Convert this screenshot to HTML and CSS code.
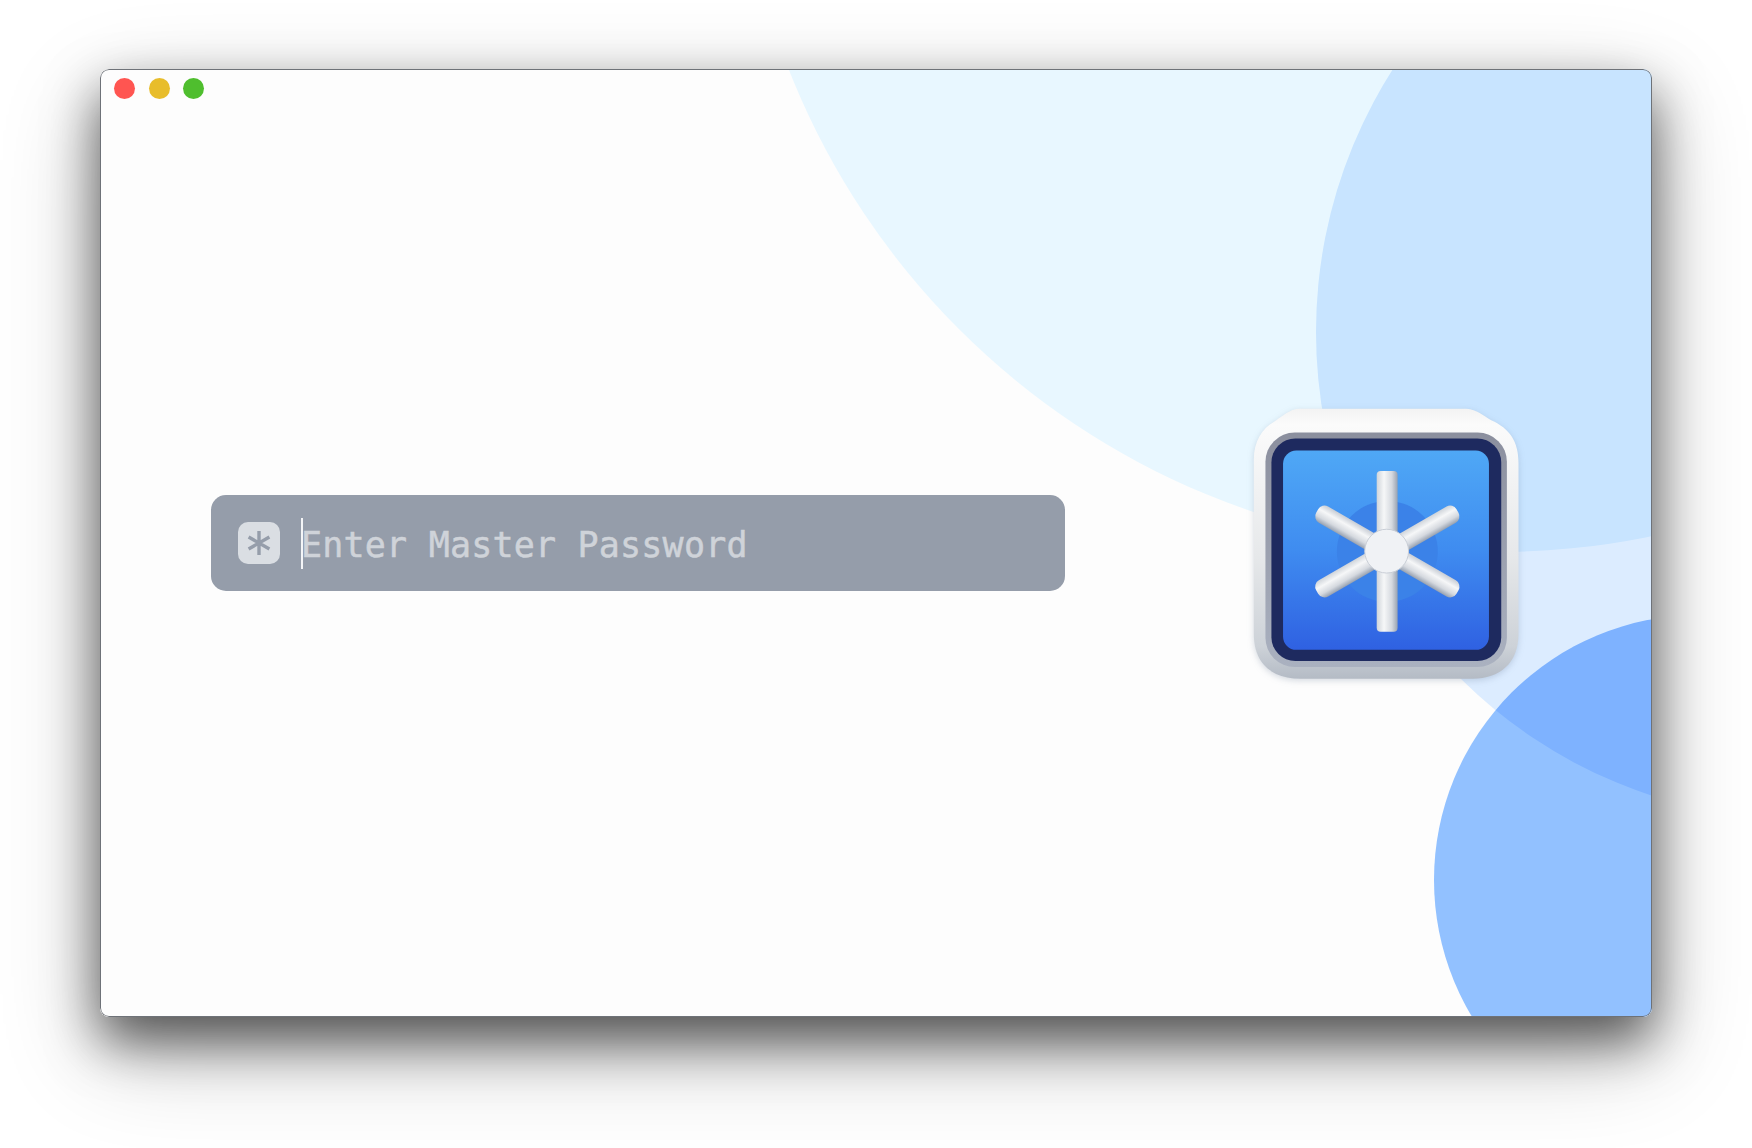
FILE: index.html
```html
<!DOCTYPE html>
<html lang="en">
<head>
<meta charset="utf-8">
<title>Enter Master Password</title>
<link rel="stylesheet" href="styles.css">
</head>
<body>
<main class="window">
  <div class="backdrop">
    <div class="circle circle-top"></div>
    <div class="circle circle-right"></div>
    <div class="circle circle-bottom"></div>
  </div>
  <div class="traffic">
    <span class="light light-red"></span>
    <span class="light light-yellow"></span>
    <span class="light light-green"></span>
  </div>
  <div class="content">
    <div class="password">
      <span class="key">
        <svg class="key-glyph" viewBox="0 0 30 30" aria-hidden="true">
          <path d="M15 3V27M4.6 9 25.4 21M25.4 9 4.6 21"/>
        </svg>
      </span>
      <span class="caret"></span>
      <span class="placeholder">Enter Master Password</span>
    </div>
    <svg class="app-icon" viewBox="98 50 800 816" aria-hidden="true">
      <defs>
        <linearGradient id="shell" x1="0" y1="0" x2="0" y2="1">
          <stop offset="0" stop-color="#f3f3f3"/>
          <stop offset=".06" stop-color="#fbfbfb"/>
          <stop offset=".55" stop-color="#e6e8ea"/>
          <stop offset=".88" stop-color="#cdd2d8"/>
          <stop offset="1" stop-color="#b4bbc5"/>
        </linearGradient>
        <linearGradient id="ring" x1="0" y1="0" x2="0" y2="1">
          <stop offset="0" stop-color="#8b8f9e"/>
          <stop offset="1" stop-color="#aab1c0"/>
        </linearGradient>
        <linearGradient id="face" x1="0" y1="0" x2="0" y2="1">
          <stop offset="0" stop-color="#4fa8f6"/>
          <stop offset=".5" stop-color="#3f8cf0"/>
          <stop offset="1" stop-color="#2f61e2"/>
        </linearGradient>
        <linearGradient id="spoke" x1="0" y1="0" x2="1" y2="0">
          <stop offset="0" stop-color="#cfd4da"/>
          <stop offset=".35" stop-color="#f6f7f8"/>
          <stop offset=".72" stop-color="#d5d9df"/>
          <stop offset="1" stop-color="#98a2b1"/>
        </linearGradient>
        <linearGradient id="spoke-down" x1="0" y1="0" x2="1" y2="0">
          <stop offset="0" stop-color="#98a2b1"/>
          <stop offset=".28" stop-color="#d5d9df"/>
          <stop offset=".65" stop-color="#f6f7f8"/>
          <stop offset="1" stop-color="#c8cdd5"/>
        </linearGradient>
      </defs>
      <path fill="url(#shell)" d="M235 52H740C772 54 790 72 815 87C870 112 897 150 897 215V730C897 820 840 865 760 865H240C155 865 100 820 100 730V205C100 150 125 112 160 92C190 72 205 55 235 52Z"/>
      <rect x="135" y="124" width="727" height="706" rx="88" fill="url(#ring)"/>
      <rect x="153" y="142" width="692" height="670" rx="72" fill="#1e2a5f"/>
      <rect x="188" y="178" width="620" height="600" rx="40" fill="url(#face)"/>
      <circle cx="502" cy="482" r="152" fill="#3b82e8"/>
      <rect x="474" y="238" width="56" height="488" rx="22" fill="url(#spoke)" transform="rotate(60 502 482)"/>
      <rect x="474" y="238" width="56" height="488" rx="22" fill="url(#spoke-down)" transform="rotate(-60 502 482)"/>
      <rect x="470" y="240" width="63" height="484" rx="12" fill="url(#spoke)"/>
      <circle cx="500" cy="481" r="66" fill="#f0f2f5" stroke="#c9ced6" stroke-width="3"/>
    </svg>
  </div>
</main>
</body>
</html>
```

FILE: styles.css
```css
html, body {
  margin: 0;
  height: 100%;
  background: #fff;
  overflow: hidden;
}

body {
  padding: 69px 100px 131px;
  box-sizing: border-box;
}

.window {
  position: relative;
  box-sizing: border-box;
  width: 1552px;
  height: 948px;
  overflow: hidden;
  background: #fdfdfd;
  border-radius: 9px;
}

.window::after {
  content: "";
  position: absolute;
  inset: 0;
  z-index: 5;
  border: 1px solid #6e7278;
  border-radius: 9px;
  pointer-events: none;
}

body::before {
  content: "";
  position: absolute;
  left: 100px;
  top: 69px;
  width: 1552px;
  height: 948px;
  border-radius: 9px;
  box-shadow:
    0 24px 52px rgba(0, 0, 0, .6),
    0 34px 100px rgba(0, 0, 0, .24);
}

.backdrop {
  position: absolute;
  inset: 0;
  isolation: isolate;
}

.circle {
  position: absolute;
  border-radius: 50%;
  mix-blend-mode: multiply;
}

.circle-top {
  left: 636px;
  top: -1039px;
  width: 1522px;
  height: 1522px;
  background: #e8f7ff;
}

.circle-right {
  left: 1216px;
  top: -225px;
  width: 976px;
  height: 976px;
  background: #dcecff;
}

.circle-bottom {
  left: 1334px;
  top: 546px;
  width: 530px;
  height: 530px;
  background: #92c1ff;
}

.traffic {
  position: absolute;
  left: 14px;
  top: 9px;
  display: flex;
  gap: 13.5px;
}

.light {
  width: 21px;
  height: 21px;
  border-radius: 50%;
}

.light-red { background: #ff5551; }
.light-yellow { background: #e8bd2b; }
.light-green { background: #4fbe2e; }

.content {
  position: relative;
  z-index: 1;
  display: flex;
  align-items: center;
  gap: 188px;
  height: 100%;
  padding-left: 111px;
}

.password {
  display: flex;
  align-items: center;
  flex: none;
  box-sizing: border-box;
  width: 854px;
  height: 96px;
  padding-left: 27px;
  background: #959daa;
  border-radius: 15px;
}

.key {
  display: flex;
  align-items: center;
  justify-content: center;
  width: 42px;
  height: 42px;
  background: #dadee3;
  border-radius: 10px;
}

.key-glyph {
  width: 30px;
  height: 30px;
  fill: none;
  stroke: #959daa;
  stroke-width: 3.4;
}

.caret {
  width: 2px;
  height: 51px;
  margin-left: 21px;
  background: #f4f5f7;
}

.placeholder {
  margin-left: -2px;
  padding-top: 4px;
  font-family: "DejaVu Sans Mono", "Liberation Mono", monospace;
  font-size: 35px;
  letter-spacing: .2px;
  line-height: 1;
  color: #cfd3d9;
  -webkit-text-stroke: .5px #cfd3d9;
  white-space: nowrap;
}

.app-icon {
  flex: none;
  width: 266px;
  height: 271px;
  filter: drop-shadow(0 2px 3px rgba(90, 110, 140, .25));
}
```
